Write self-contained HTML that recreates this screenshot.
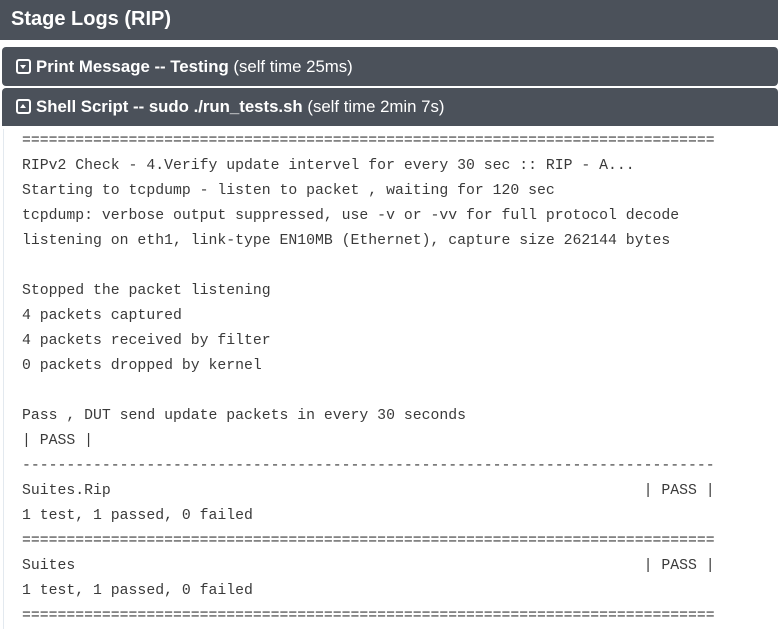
<!DOCTYPE html>
<html><head><style>
body{margin:0;width:778px;height:622px;overflow:hidden;background:#fff;font-family:"Liberation Sans",sans-serif;}
.title{height:40px;background:#4b515a;color:#fff;font-weight:bold;font-size:20px;line-height:38px;padding-left:11px;}
.bar{position:absolute;left:2px;right:0;background:#4b515a;color:#fff;font-size:16.8px;border-radius:4px;padding-left:14px;box-sizing:border-box;white-space:nowrap}
.bar b{font-weight:bold}
.ic{display:inline-block;width:11px;height:11px;border:2px solid #fff;border-radius:3px;vertical-align:-2px;margin-right:5px;position:relative;box-sizing:content-box}
.ic:after{content:"";position:absolute;left:2px;border-left:3.5px solid transparent;border-right:3.5px solid transparent}
.dn:after{top:4px;border-top:4px solid #fff}
.up:after{top:3px;border-bottom:4px solid #fff}
pre{position:absolute;left:3px;top:129px;margin:0;padding-left:18px;border-left:1px solid #e3e9ef;font-family:"Liberation Mono",monospace;font-size:14.8px;line-height:25px;color:#3a3a3a;height:500px;}
</style></head><body>
<div class="title">Stage Logs (RIP)</div>
<div class="bar" style="top:47px;height:39px;line-height:39px;"><span class="ic dn"></span><b>Print Message -- Testing</b> (self time 25ms)</div>
<div class="bar" style="top:88px;height:38px;line-height:38px;border-radius:4px 4px 0 0"><span class="ic up"></span><b>Shell Script -- sudo ./run_tests.sh</b> (self time 2min 7s)</div>
<pre>==============================================================================
RIPv2 Check - 4.Verify update intervel for every 30 sec :: RIP - A...
Starting to tcpdump - listen to packet , waiting for 120 sec
tcpdump: verbose output suppressed, use -v or -vv for full protocol decode
listening on eth1, link-type EN10MB (Ethernet), capture size 262144 bytes

Stopped the packet listening
4 packets captured
4 packets received by filter
0 packets dropped by kernel

Pass , DUT send update packets in every 30 seconds
| PASS |
------------------------------------------------------------------------------
Suites.Rip                                                            | PASS |
1 test, 1 passed, 0 failed
==============================================================================
Suites                                                                | PASS |
1 test, 1 passed, 0 failed
==============================================================================</pre>
</body></html>
